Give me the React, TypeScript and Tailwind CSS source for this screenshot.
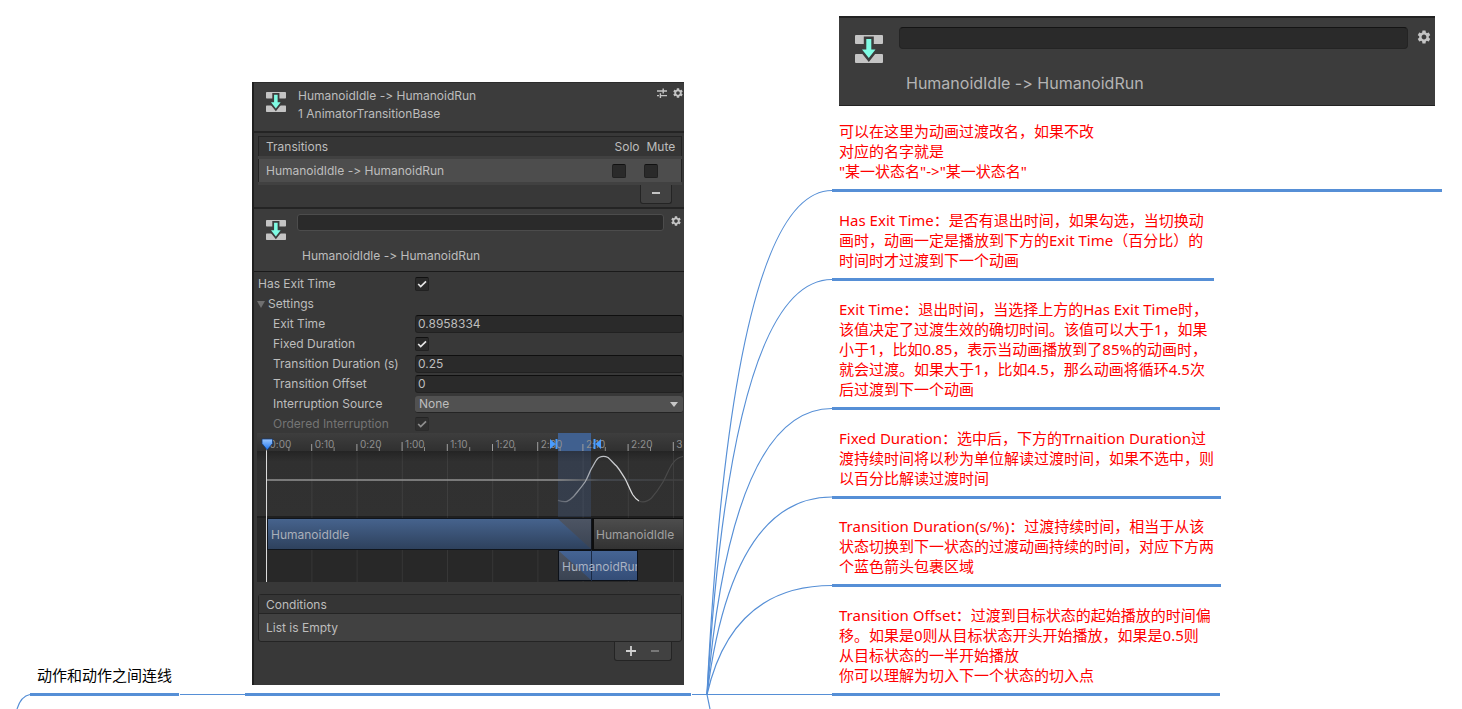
import React from "react";
import { MdSettings } from "react-icons/md";

const TICKS = ["0:00", "0:10", "0:20", "1:00", "1:10", "1:20", "2:00", "2:10", "2:20", "3"];
const TICK_STEP = 45.2;

function TransitionIcon({ className }: { className: string }) {
  return (
    <svg viewBox="0 0 28 28" className={className} aria-hidden="true">
      <rect x="0" y="0" width="28" height="9" rx="1" fill="#c4c4c4" />
      <rect x="0" y="19" width="28" height="9" rx="1" fill="#c4c4c4" />
      <path
        d="M11.3 4h5v10.5h4.2L13.8 23 7 14.5h4.3z"
        fill="#7ffbe3"
        stroke="#3c3c3c"
        strokeWidth="5"
        paintOrder="stroke"
      />
    </svg>
  );
}

function PresetIcon() {
  return (
    <svg viewBox="0 0 12 12" className="size-3" fill="none" stroke="#c4c4c4" strokeWidth="1.4" aria-hidden="true">
      <path d="M1 4h5.5M7.2 1.5v5M7.2 4H11M1 8.6h2M4.4 6.2v4.8M5 8.6h6" />
    </svg>
  );
}

function CheckBox({ id, label, checked, disabled }: { id: string; label?: string; checked?: boolean; disabled?: boolean }) {
  return (
    <span className={disabled ? "grid size-[14px] opacity-50" : "grid size-[14px]"}>
      <input
        id={id}
        type="checkbox"
        aria-label={label}
        defaultChecked={checked}
        disabled={disabled}
        className="peer col-start-1 row-start-1 size-[14px] appearance-none rounded-[2px] border border-[#212121] border-t-[#111] bg-[#2a2a2a]"
      />
      <svg
        viewBox="0 0 14 14"
        className="pointer-events-none invisible col-start-1 row-start-1 size-[14px] peer-checked:visible"
        fill="none"
        stroke="#e4e4e4"
        strokeWidth="1.7"
        aria-hidden="true"
      >
        <path d="M3.2 7l2.5 2.5L11 4.3" />
      </svg>
    </span>
  );
}

function Field({ id, label, children, dim, root }: { id: string; label: string; children: React.ReactNode; dim?: boolean; root?: boolean }) {
  return (
    <div className={root ? "flex h-5 items-center pr-px pl-1" : "flex h-5 items-center pr-px pl-[19px]"}>
      <label
        htmlFor={id}
        className={root ? "w-[157px] shrink-0" : dim ? "w-[142px] shrink-0 text-[#747474]" : "w-[142px] shrink-0"}
      >
        {label}
      </label>
      {children}
    </div>
  );
}

function NumberBox({ id, value }: { id: string; value: string }) {
  return (
    <input
      id={id}
      type="text"
      defaultValue={value}
      className="h-[18px] min-w-0 flex-1 rounded-[3px] border border-[#212121] border-t-[#0f0f0f] bg-[#2a2a2a] px-[2px]"
    />
  );
}

function Timeline() {
  return (
    <svg viewBox="0 0 426 149" className="block w-full font-['Inter',sans-serif]" role="img" aria-label="Transition timeline">
      <defs>
        <linearGradient id="ruler" x1="0" y1="0" x2="0" y2="1">
          <stop offset="0" stopColor="#3e3e3e" />
          <stop offset="1" stopColor="#303030" />
        </linearGradient>
        <linearGradient id="lane" x1="0" y1="0" x2="0" y2="1">
          <stop offset="0" stopColor="#242424" />
          <stop offset="0.16" stopColor="#303030" />
          <stop offset="1" stopColor="#313131" />
        </linearGradient>
        <linearGradient id="blue" x1="0" y1="0" x2="0" y2="1">
          <stop offset="0" stopColor="#46638d" />
          <stop offset="1" stopColor="#2e415d" />
        </linearGradient>
        <linearGradient id="blueLit" x1="0" y1="0" x2="0" y2="1">
          <stop offset="0" stopColor="#456494" />
          <stop offset="1" stopColor="#344d77" />
        </linearGradient>
        <linearGradient id="grey" x1="0" y1="0" x2="0" y2="1">
          <stop offset="0" stopColor="#4d4d4d" />
          <stop offset="1" stopColor="#323232" />
        </linearGradient>
        <linearGradient id="slate" x1="0" y1="0" x2="0" y2="1">
          <stop offset="0" stopColor="#4d5564" />
          <stop offset="1" stopColor="#3a4352" />
        </linearGradient>
        <linearGradient id="level" gradientUnits="userSpaceOnUse" x1="10" y1="0" x2="426" y2="0">
          <stop offset="0" stopColor="#929292" />
          <stop offset="0.7" stopColor="#929292" />
          <stop offset="0.8" stopColor="#484d55" />
          <stop offset="1" stopColor="#404040" />
        </linearGradient>
        <linearGradient id="wave" gradientUnits="userSpaceOnUse" x1="301" y1="0" x2="382" y2="0">
          <stop offset="0" stopColor="#5a606b" />
          <stop offset="0.4" stopColor="#b0b4ba" />
          <stop offset="1" stopColor="#e2e2e2" />
        </linearGradient>
        <linearGradient id="marker" x1="0" y1="0" x2="0" y2="1">
          <stop offset="0" stopColor="#9cc8ff" />
          <stop offset="1" stopColor="#1b73ee" />
        </linearGradient>
        <clipPath id="runClip">
          <rect x="302" y="117" width="78" height="31" />
        </clipPath>
      </defs>
      <rect width="426" height="18" fill="url(#ruler)" />
      <rect y="18" width="426" height="66" fill="url(#lane)" />
      <rect y="84" width="426" height="65" fill="#282828" />
      <rect y="83" width="426" height="2" fill="#1f1f1f" />
      <rect x="301" y="0" width="33" height="18" fill="#40608f" />
      {TICKS.map((t, i) => (
        <g key={t}>
          <rect x={9.2 + i * TICK_STEP} y="19" width="1" height="130" fill="#fff" opacity="0.07" />
          <rect x={9 + i * TICK_STEP} y={i % 3 ? 11 : 9} width="1" height={i % 3 ? 7 : 9} fill="#a0a0a0" />
          <rect x={31.4 + i * TICK_STEP} y="14" width="1" height="4" fill="#8a8a8a" />
          <text x={12.5 + i * TICK_STEP} y="14.5" fontSize="10" fill="#8f8f8f">
            {t}
          </text>
        </g>
      ))}
      <rect x="301" y="18" width="33" height="66" fill="#4a6fae" opacity="0.22" />
      <path d="M10 47H426" stroke="url(#level)" strokeWidth="1.5" />
      <path
        d="M382 68C386 70 390 69 394.5 65C399 60 403 54 406 49C410 42 412 35 416 30C419 26 422 24 426 23.5"
        fill="none"
        stroke="#4a4a4a"
        strokeWidth="1.2"
      />
      <path
        d="M301 67.3C304 68.3 307 69.3 310 68.3C313 67.3 315 65 317 63C321 58 325 53.5 328 49C331 44 332 40 334.5 35.5C338 30 339 26 342 24.5C345 23 348 23 351 24.5C354 27 356 30 359.5 33C363 37 365 41 368 45.5C371 51 373 57 376 62C378 65 380 67 382 68"
        fill="none"
        stroke="url(#wave)"
        strokeWidth="1.3"
      />
      <rect x="10" y="85" width="325" height="32" fill="#10151d" />
      <rect x="11" y="86" width="323" height="30" fill="url(#blue)" />
      <path d="M301 86H334V116z" fill="url(#slate)" />
      <rect x="335" y="85" width="91" height="32" fill="#0e0e0e" />
      <rect x="337" y="86" width="89" height="30" fill="url(#grey)" />
      <rect x="301" y="117" width="80" height="31" fill="#0c1119" />
      <rect x="302" y="118" width="78" height="29" fill="url(#blueLit)" />
      <path d="M302 118V147H334z" fill="url(#slate)" />
      <rect x="334" y="117" width="1" height="31" fill="#1b2a44" />
      <text x="14" y="105.5" fontSize="12" fill="#a9afb9">HumanoidIdle</text>
      <text x="339" y="105.5" fontSize="12" fill="#a0a0a0">HumanoidIdle</text>
      <text x="305" y="137.5" fontSize="12" fill="#a9b2c2" clipPath="url(#runClip)">HumanoidRun</text>
      <path d="M9.5 18V149" stroke="#dcdcdc" strokeWidth="1" />
      <path d="M5 6h10.5v4.5L10.2 17 5 10.5z" fill="url(#marker)" stroke="#123a78" strokeWidth="0.8" />
      <path d="M293 6v10l5.5-5zM298.5 6h2v10h-2z" fill="#4a9dff" />
      <path d="M344 6v10l-5.5-5zM336.5 6h2v10h-2z" fill="#4a9dff" />
    </svg>
  );
}

function Inspector() {
  return (
    <section className="flex flex-col border-l-2 border-[#1f1f1f] bg-[#383838] font-['Inter',sans-serif] text-[12px] leading-[18px] text-[#bdbdbd] [font-feature-settings:'calt'_0]">
      <header className="flex h-[51px] items-start border-t border-b-2 border-t-[#2c2c2c] border-b-[#242424] bg-[#3c3c3c] pt-1 pl-3">
        <TransitionIcon className="mt-[5px] size-5" />
        <div className="ml-3 flex-1">
          <h2>HumanoidIdle -&gt; HumanoidRun</h2>
          <p>1 AnimatorTransitionBase</p>
        </div>
        <div className="flex items-center gap-1">
          <button type="button" aria-label="Presets"><PresetIcon /></button>
          <button type="button" aria-label="Settings"><MdSettings className="size-3 text-[#c4c4c4]" /></button>
        </div>
      </header>

      <div className="flex h-[74px] flex-col px-[2px] pt-[3px] pl-1">
        <table className="w-full table-fixed border border-[#242424] bg-[#414141] text-left">
          <thead>
            <tr className="h-5 border-b border-[#242424] bg-[#353535]">
              <th scope="col" className="pt-px pl-[7px] font-normal">Transitions</th>
              <th scope="col" className="w-8 pt-px pl-[3px] font-normal">Solo</th>
              <th scope="col" className="w-[38px] pt-px pl-[3px] font-normal">Mute</th>
            </tr>
          </thead>
          <tbody>
            <tr className="h-[26px] border-y-[3px] border-[#414141] bg-[#4d4d4d]">
              <td className="pt-px pl-[7px]">HumanoidIdle -&gt; HumanoidRun</td>
              <td className="pt-px"><CheckBox id="solo" label="Solo" /></td>
              <td className="pt-px"><CheckBox id="mute" label="Mute" /></td>
            </tr>
          </tbody>
        </table>
        <div className="mr-[10px] flex h-[19px] w-8 shrink-0 items-center justify-center self-end rounded-b-[3px] border border-t-0 border-[#242424] bg-[#414141] pb-[2px]">
          <button type="button" aria-label="Remove transition" className="flex h-4 w-6 items-center justify-center">
            <span className="h-[2px] w-2 bg-[#c4c4c4]" />
          </button>
        </div>
      </div>

      <div className="flex h-[65px] items-start border-t-2 border-b border-t-[#242424] border-b-[#1a1a1a] bg-[#3c3c3c] pt-[5px] pl-3">
        <TransitionIcon className="mt-[6px] size-5" />
        <div className="ml-[11px] flex flex-1 flex-col">
          <input
            type="text"
            aria-label="Transition name"
            className="h-[17px] rounded-[3px] border border-[#4c4c4c] bg-[#2a2a2a] px-1"
          />
          <p className="mt-4 pl-[5px]">HumanoidIdle -&gt; HumanoidRun</p>
        </div>
        <button type="button" aria-label="Transition settings" className="mr-[2px] ml-[6px] pt-px">
          <MdSettings className="size-3 text-[#c4c4c4]" />
        </button>
      </div>

      <div className="h-[161px] pt-[2px]">
        <Field id="has-exit" label="Has Exit Time" root><CheckBox id="has-exit" checked /></Field>
        <button type="button" className="flex h-5 items-center gap-[3px] pl-[3px]">
          <svg viewBox="0 0 8 7" className="h-[7px] w-2" aria-hidden="true"><path d="M0 0h8L4 7z" fill="#707070" /></svg>
          Settings
        </button>
        <Field id="exit-time" label="Exit Time"><NumberBox id="exit-time" value="0.8958334" /></Field>
        <Field id="fixed" label="Fixed Duration"><CheckBox id="fixed" checked /></Field>
        <Field id="duration" label="Transition Duration (s)"><NumberBox id="duration" value="0.25" /></Field>
        <Field id="offset" label="Transition Offset"><NumberBox id="offset" value="0" /></Field>
        <Field id="source" label="Interruption Source">
          <div className="grid min-w-0 flex-1 items-center">
            <select
              id="source"
              className="col-start-1 row-start-1 h-[17px] w-full appearance-none rounded-[3px] border-b border-[#242424] bg-[#515151] px-1 leading-4"
            >
              <option>None</option>
            </select>
            <svg viewBox="0 0 8 5" className="pointer-events-none col-start-1 row-start-1 mr-[5px] h-[5px] w-2 justify-self-end" aria-hidden="true">
              <path d="M0 0h8L4 5z" fill="#c8c8c8" />
            </svg>
          </div>
        </Field>
        <Field id="ordered" label="Ordered Interruption" dim><CheckBox id="ordered" checked disabled /></Field>
      </div>

      <div className="pr-px pl-[3px]">
        <Timeline />
      </div>

      <div className="flex flex-col pt-3 pr-[2px] pb-6 pl-1">
        <div className="rounded-[3px] border border-[#242424] bg-[#414141]">
          <h3 className="h-[19px] border-b border-[#242424] bg-[#353535] pt-px pl-[7px]">Conditions</h3>
          <p className="h-[27px] pl-[7px] leading-7">List is Empty</p>
        </div>
        <div className="mr-[10px] flex h-[19px] items-center justify-around self-end rounded-b-[3px] border border-t-0 border-[#242424] bg-[#414141] px-1">
          <button type="button" aria-label="Add condition" className="flex h-4 w-6 items-center justify-center">
            <svg viewBox="0 0 10 10" className="size-[10px]" aria-hidden="true"><path d="M5 0v10M0 5h10" stroke="#d0d0d0" strokeWidth="1.8" /></svg>
          </button>
          <button type="button" aria-label="Remove condition" className="flex h-4 w-6 items-center justify-center">
            <span className="h-[2px] w-2 bg-[#787878]" />
          </button>
        </div>
      </div>
    </section>
  );
}

function RenameHeader() {
  return (
    <section className="flex h-[90px] items-start border-t-2 border-b border-[#222] bg-[#3c3c3c] pt-[9px] pl-4 font-['Inter',sans-serif] font-normal [font-feature-settings:'calt'_0]">
      <TransitionIcon className="mt-2 size-7" />
      <div className="ml-4 flex flex-1 flex-col">
        <input
          type="text"
          aria-label="Rename transition"
          className="h-[22px] rounded-[4px] border border-[#242424] border-t-[#141414] bg-[#2a2a2a] px-2 text-[16px] text-[#bdbdbd]"
        />
        <p className="mt-[22px] pl-[7px] text-[16px] leading-6 text-[#b4b4b4]">HumanoidIdle -&gt; HumanoidRun</p>
      </div>
      <button type="button" aria-label="Transition options" className="mr-[3px] ml-2 pt-[2px]">
        <MdSettings className="size-4 text-[#c4c4c4]" />
      </button>
    </section>
  );
}

function Note({ lines }: { lines: string[] }) {
  return (
    <p className="text-[#ff0000]">
      {lines.map((line) => (
        <span key={line} className="block">{line}</span>
      ))}
    </p>
  );
}

const NODE = "absolute border-b-[3px] border-[#568fd6] px-[7px] whitespace-nowrap";

export default function App() {
  return (
    <main className="relative h-screen overflow-hidden bg-white font-['Noto_Sans','Noto_Sans_CJK_SC',sans-serif] text-[15px] leading-5 font-[390]">
      <svg className="absolute top-0 left-0 h-[709px] w-[1462px]" viewBox="0 0 1462 709" fill="none" stroke="#568fd6" strokeWidth="1.2" aria-hidden="true">
        <path d="M17 709Q21 696 30 694.5M180 694.5H245M692 694.5H832" />
        <path d="M707 694.5Q732 190.5 832 190.5" />
        <path d="M707 694.5Q732 279.5 832 279.5" />
        <path d="M707 694.5Q732 408.5 832 408.5" />
        <path d="M707 694.5Q732 497 832 497" />
        <path d="M707 694.5Q732 585.5 832 585.5" />
        <path d="M707 694.5L710 709" />
      </svg>

      <div className={`${NODE} top-[665px] left-[30px] pb-2 text-black`}>动作和动作之间连线</div>

      <div className={`${NODE} top-[82px] left-[245px] w-[446px] pb-2 font-normal`}>
        <Inspector />
      </div>

      <div className={`${NODE} top-4 left-[832px] w-[610px] pb-2`}>
        <RenameHeader />
        <div className="pt-[15px]">
          <Note lines={["可以在这里为动画过渡改名，如果不改", "对应的名字就是", "\"某一状态名\"->\"某一状态名\""]} />
        </div>
      </div>

      <div className={`${NODE} top-[210px] left-[832px] w-[382px] pb-2`}>
        <Note
          lines={[
            "Has Exit Time：是否有退出时间，如果勾选，当切换动",
            "画时，动画一定是播放到下方的Exit Time（百分比）的",
            "时间时才过渡到下一个动画",
          ]}
        />
      </div>

      <div className={`${NODE} top-[299px] left-[832px] w-[388px] pb-2`}>
        <Note
          lines={[
            "Exit Time：退出时间，当选择上方的Has Exit Time时，",
            "该值决定了过渡生效的确切时间。该值可以大于1，如果",
            "小于1，比如0.85，表示当动画播放到了85%的动画时，",
            "就会过渡。如果大于1，比如4.5，那么动画将循环4.5次",
            "后过渡到下一个动画",
          ]}
        />
      </div>

      <div className={`${NODE} top-[428px] left-[832px] w-[389px] pb-2`}>
        <Note
          lines={[
            "Fixed Duration：选中后，下方的Trnaition Duration过",
            "渡持续时间将以秒为单位解读过渡时间，如果不选中，则",
            "以百分比解读过渡时间",
          ]}
        />
      </div>

      <div className={`${NODE} top-[516px] left-[832px] w-[389px] pb-2`}>
        <Note
          lines={[
            "Transition Duration(s/%)：过渡持续时间，相当于从该",
            "状态切换到下一状态的过渡动画持续的时间，对应下方两",
            "个蓝色箭头包裹区域",
          ]}
        />
      </div>

      <div className={`${NODE} top-[605px] left-[832px] w-[388px] pb-2`}>
        <Note
          lines={[
            "Transition Offset：过渡到目标状态的起始播放的时间偏",
            "移。如果是0则从目标状态开头开始播放，如果是0.5则",
            "从目标状态的一半开始播放",
            "你可以理解为切入下一个状态的切入点",
          ]}
        />
      </div>
    </main>
  );
}
